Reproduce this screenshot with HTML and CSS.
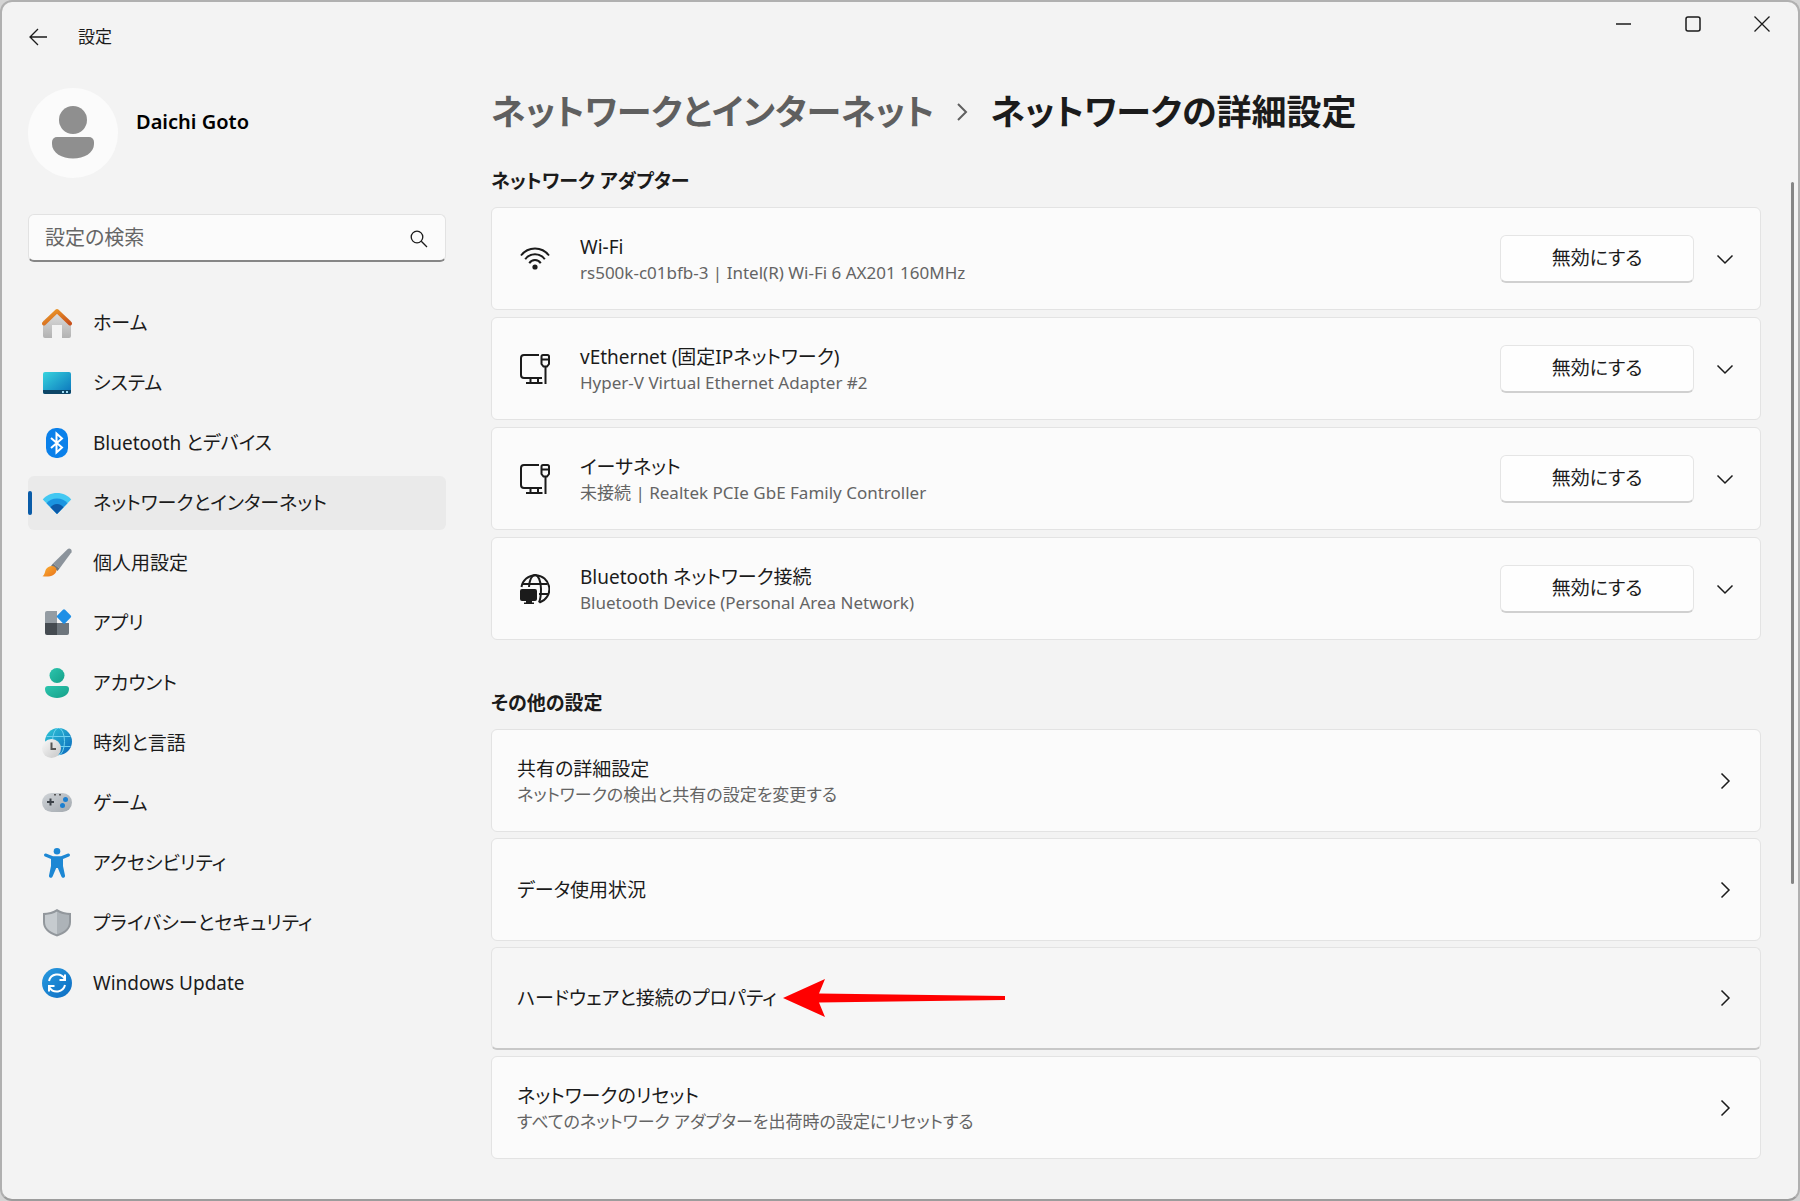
FILE: index.html
```html
<!DOCTYPE html>
<html lang="ja">
  <head>
    <meta charset="UTF-8" />
    <meta
      name="viewport"
      content="width=device-width, initial-scale=1.0"
    />
    <title>設定</title>

    <link rel="stylesheet" href="styles.css">
  </head>
  <body>
    <!-- shared icon shapes -->
    <svg class="sprite" width="0" height="0" aria-hidden="true">
      <symbol id="chevron-down" viewBox="0 0 18 18">
        <path d="M1.5 5.5 9 13l7.5-7.5" fill="none" stroke="currentColor" stroke-width="1.5" />
      </symbol>
      <symbol id="chevron-right" viewBox="0 0 18 18">
        <path d="M5.5 1.5 13 9l-7.5 7.5" fill="none" stroke="currentColor" stroke-width="1.5" />
      </symbol>
      <symbol id="ethernet" viewBox="0 0 30 30">
        <g fill="none" stroke="currentColor" stroke-width="2">
          <path d="M19 1H4a3 3 0 0 0-3 3v17a3 3 0 0 0 3 3h18M10.500 24v5M18 24v5M6 29h16.500" />
          <path d="M21.500 2.500a1.500 1.500 0 0 1 1.500-1.500h4.500a1.500 1.500 0 0 1 1.500 1.500V10l-2 2.500h-3.500L21.500 10zM21.500 5.500H29M25.500 12.500V30" />
        </g>
      </symbol>
    </svg>

    <div class="window">
      <header class="title-bar">
        <button class="back-button" aria-label="戻る">
          <svg width="18" height="18" viewBox="0 0 18 18">
            <path d="M9 1 1 9l8 8M1 9h17" fill="none" stroke="currentColor" stroke-width="1.3" />
          </svg>
        </button>
        <span class="app-name">設定</span>
        <div class="window-buttons">
          <button class="window-button" aria-label="最小化">
            <svg width="16" height="16" viewBox="0 0 16 16"><path d="M0 8h15" stroke="currentColor" stroke-width="1.500" /></svg>
          </button>
          <button class="window-button" aria-label="最大化">
            <svg width="16" height="16" viewBox="0 0 16 16"><rect x="1" y="1" width="14" height="14" rx="2" fill="none" stroke="currentColor" stroke-width="1.500" /></svg>
          </button>
          <button class="window-button" aria-label="閉じる">
            <svg width="16" height="16" viewBox="0 0 16 16"><path d="m.5.5 15 15m0-15-15 15" stroke="currentColor" stroke-width="1.300" /></svg>
          </button>
        </div>
      </header>

      <div class="layout">
        <aside class="sidebar">
          <div class="profile">
            <div class="avatar">
              <svg width="44" height="54" viewBox="0 0 44 54" fill="#8f8f8f">
                <circle cx="22" cy="14" r="14" />
                <path d="M6 31h32a5 5 0 0 1 5 5v2c0 9-10 14.500-21 14.500S1 47 1 38v-2a5 5 0 0 1 5-5z" />
              </svg>
            </div>
            <div class="profile-name">Daichi Goto</div>
          </div>

          <form class="search">
            <input class="search-input" type="search" placeholder="設定の検索" aria-label="設定の検索" />
            <svg class="search-icon" width="18" height="18" viewBox="0 0 18 18">
              <circle cx="7" cy="7" r="5.800" fill="none" stroke="currentColor" stroke-width="1.300" />
              <path d="m11.300 11.300 5.700 5.700" stroke="currentColor" stroke-width="1.300" />
            </svg>
          </form>

          <nav class="nav">
            <a class="nav-item" href="#">
              <svg class="nav-icon" viewBox="0 0 30 30">
                <defs>
                  <linearGradient id="roof" x2="1" y2="1"><stop stop-color="#f0a02a" /><stop offset="1" stop-color="#c8501b" /></linearGradient>
                  <linearGradient id="wall" x2="0" y2="1"><stop stop-color="#e3e3e3" /><stop offset="1" stop-color="#b2b2b2" /></linearGradient>
                </defs>
                <path d="M1 13 15 1l14 12v15a2 2 0 0 1-2 2h-7V17H10v13H3a2 2 0 0 1-2-2z" fill="url(#wall)" />
                <path d="M2 15.500 15 3l13 12.500" fill="none" stroke="url(#roof)" stroke-width="4" stroke-linecap="round" stroke-linejoin="round" />
              </svg>
              ホーム
            </a>
            <a class="nav-item" href="#">
              <svg class="nav-icon" viewBox="0 0 30 30">
                <defs><linearGradient id="screen" x2="1" y2="1"><stop stop-color="#37d4de" /><stop offset="1" stop-color="#0a72bb" /></linearGradient></defs>
                <rect x="1" y="4" width="28" height="22" rx="2" fill="url(#screen)" />
                <path d="M1 22h28v2a2 2 0 0 1-2 2H3a2 2 0 0 1-2-2z" fill="#0c4566" />
                <path d="M20 23h2v2h-2zM24 23h2v2h-2z" fill="#9fdcf5" />
              </svg>
              システム
            </a>
            <a class="nav-item" href="#">
              <svg class="nav-icon" viewBox="0 0 30 30">
                <rect x="4" width="22" height="30" rx="10" fill="#0a80ea" />
                <path d="m9 10 11 9.500-5.500 5V5.500l5.500 5L9 20" fill="none" stroke="#fff" stroke-width="2" />
              </svg>
              Bluetooth とデバイス
            </a>
            <a class="nav-item nav-item-active" href="#" aria-current="page">
              <svg class="nav-icon" viewBox="0 0 30 30">
                <path d="M15 26 .8 11.500C4 7.500 9 5 15 5s11 2.500 14.200 6.500z" fill="#43c8f2" />
                <path d="M15 26 4.500 15.300C7 12.300 10.500 10.500 15 10.500s8 1.800 10.500 4.800z" fill="#1b94e0" />
                <path d="M15 26 8.500 19.300C10 17.300 12.200 16 15 16s5 1.300 6.500 3.300z" fill="#0c59a8" />
              </svg>
              ネットワークとインターネット
            </a>
            <a class="nav-item" href="#">
              <svg class="nav-icon" viewBox="0 0 30 30">
                <defs><linearGradient id="tip" x2="1" y2="1"><stop stop-color="#fbb034" /><stop offset="1" stop-color="#e8731a" /></linearGradient></defs>
                <path d="M25.500 1.200c2-1.700 4.800.2 4 3L17.500 20.500 11 15.500z" fill="#8b939b" />
                <path d="M11 15.500l6.500 5-2 2.500-6.500-5z" fill="#6f777e" />
                <path d="M14.500 22.500C14 27 8 29.500.5 28.300c2.800-2 2-4.300 3.500-7 1.700-3.200 6.500-4.500 9-2.300 1 .9 1.600 2.100 1.500 3.500z" fill="url(#tip)" />
              </svg>
              個人用設定
            </a>
            <a class="nav-item" href="#">
              <svg class="nav-icon" viewBox="0 0 30 30">
                <path d="M5 3h10v12H3V5a2 2 0 0 1 2-2z" fill="#949ca3" />
                <path d="M3 15h12v12H5a2 2 0 0 1-2-2z" fill="#454b51" />
                <path d="M15 15h12v10a2 2 0 0 1-2 2H15z" fill="#6d757c" />
                <rect x="16.500" y="3" width="11" height="11" rx="1.500" transform="rotate(45 22 8.500)" fill="#1e8fe6" />
              </svg>
              アプリ
            </a>
            <a class="nav-item" href="#">
              <svg class="nav-icon" viewBox="0 0 30 30">
                <defs><linearGradient id="person" x2="1" y2="1"><stop stop-color="#2cc5ae" /><stop offset="1" stop-color="#15a088" /></linearGradient></defs>
                <circle cx="15" cy="7.500" r="7.500" fill="url(#person)" />
                <path d="M6 18h18a3 3 0 0 1 3 3c0 5.500-5.500 9-12 9S3 26.500 3 21a3 3 0 0 1 3-3z" fill="url(#person)" />
              </svg>
              アカウント
            </a>
            <a class="nav-item" href="#">
              <svg class="nav-icon" viewBox="0 0 30 30">
                <defs>
                  <linearGradient id="globe" x2="1" y2="1"><stop stop-color="#2fc8d6" /><stop offset="1" stop-color="#0b66bd" /></linearGradient>
                  <linearGradient id="clock" x2="1" y2="1"><stop stop-color="#fafafa" /><stop offset="1" stop-color="#c6c6c6" /></linearGradient>
                </defs>
                <circle cx="16.500" cy="13.500" r="13.500" fill="url(#globe)" />
                <g fill="none" stroke="#6fd0ee" stroke-width="1">
                  <ellipse cx="16.500" cy="13.500" rx="6" ry="13.500" />
                  <path d="M4.500 8.500h24M4.500 18.500h24" />
                </g>
                <circle cx="9.500" cy="20.500" r="9.500" fill="url(#clock)" />
                <path d="M9.500 14.500V21H14" fill="none" stroke="#555" stroke-width="2" />
              </svg>
              時刻と言語
            </a>
            <a class="nav-item" href="#">
              <svg class="nav-icon" viewBox="0 0 30 30">
                <defs><linearGradient id="pad" x2="1" y2="1"><stop stop-color="#d0d4d8" /><stop offset="1" stop-color="#a2a8ae" /></linearGradient></defs>
                <rect y="5" width="30" height="19" rx="9.500" fill="url(#pad)" />
                <path d="M8.500 10.500v7M5 14h7" stroke="#3c4248" stroke-width="2" />
                <circle cx="23.500" cy="11.500" r="2.500" fill="#1c7fd0" />
                <circle cx="20.500" cy="17.500" r="2.500" fill="#1c7fd0" />
                <path d="M12 6h2v1.500h-2zM17 6h2v1.500h-2z" fill="#555" />
              </svg>
              ゲーム
            </a>
            <a class="nav-item" href="#">
              <svg class="nav-icon" viewBox="0 0 30 30" fill="#1c87d4">
                <circle cx="15" cy="3.300" r="3.300" />
                <path d="M4 5.500 11 8.200h8L26 5.500c2-.7 2.700 2.300 1 3L21 11v7l2 9.500c.4 2.500-2.800 3-3.600 1L15.800 20h-1.600l-3.600 8.500c-.8 2-4 1.500-3.600-1L9 18v-7L3 8.500c-1.700-.7-1-3.700 1-3z" />
              </svg>
              アクセシビリティ
            </a>
            <a class="nav-item" href="#">
              <svg class="nav-icon" viewBox="0 0 30 30">
                <path d="M15 1c4 2.700 8.500 4 14 4v9c0 7-5 11.500-14 14.500C6 25.500 1 21 1 14V5c5.500 0 10-1.300 14-4z" fill="#92979c" />
                <path d="M15 3.500c3.500 2.200 7.500 3.200 12 3.400V14c0 5.800-4 9.600-12 12.300z" fill="#adb3b8" />
                <path d="M15 3.500C11.500 5.700 7.500 6.700 3 6.900V14c0 5.800 4 9.600 12 12.300z" fill="#c6cbcf" />
              </svg>
              プライバシーとセキュリティ
            </a>
            <a class="nav-item" href="#">
              <svg class="nav-icon" viewBox="0 0 30 30">
                <defs><linearGradient id="update" x2="1" y2="1"><stop stop-color="#2a9be0" /><stop offset="1" stop-color="#0c6cc2" /></linearGradient></defs>
                <circle cx="15" cy="15" r="15" fill="url(#update)" />
                <g fill="none" stroke="#fff" stroke-width="2">
                  <path d="M7 13a8.500 8.500 0 0 1 15.500-2.500M23 6.500V12h-5.500" />
                  <path d="M23 17a8.500 8.500 0 0 1-15.500 2.500M7 23.500V18h5.500" />
                </g>
              </svg>
              Windows Update
            </a>
          </nav>
        </aside>

        <main class="main">
          <h1 class="breadcrumb">
            <a class="breadcrumb-link" href="#">ネットワークとインターネット</a>
            <svg class="breadcrumb-arrow" width="12" height="20" viewBox="0 0 12 20">
              <path d="m2 2 8 8-8 8" fill="none" stroke="currentColor" stroke-width="2" />
            </svg>
            <span>ネットワークの詳細設定</span>
          </h1>

          <section class="section">
            <h2 class="section-title">ネットワーク アダプター</h2>
            <div class="card-list adapters">
              <div class="card">
                <svg class="card-icon" viewBox="0 0 30 30">
                  <g fill="none" stroke="currentColor" stroke-width="2">
                    <path d="M1 11.500C4.500 7 9.500 4.500 15 4.500S25.500 7 29 11.500" />
                    <path d="M5.200 15.300C7.500 12 11 10.300 15 10.300s7.500 1.700 9.800 5" />
                    <path d="M9.300 19.200c1.200-2 3.200-3.200 5.700-3.200s4.500 1.200 5.700 3.200" />
                  </g>
                  <circle cx="15" cy="23" r="2.600" fill="currentColor" />
                </svg>
                <div class="card-text">
                  <div class="card-title">Wi-Fi</div>
                  <div class="card-note">rs500k-c01bfb-3 | Intel(R) Wi-Fi 6 AX201 160MHz</div>
                </div>
                <button class="disable-button">無効にする</button>
                <button class="expand-button" aria-label="Wi-Fi"><svg class="chevron"><use href="#chevron-down" /></svg></button>
              </div>
              <div class="card">
                <svg class="card-icon"><use href="#ethernet" /></svg>
                <div class="card-text">
                  <div class="card-title">vEthernet (固定IPネットワーク)</div>
                  <div class="card-note">Hyper-V Virtual Ethernet Adapter #2</div>
                </div>
                <button class="disable-button">無効にする</button>
                <button class="expand-button" aria-label="vEthernet"><svg class="chevron"><use href="#chevron-down" /></svg></button>
              </div>
              <div class="card">
                <svg class="card-icon"><use href="#ethernet" /></svg>
                <div class="card-text">
                  <div class="card-title">イーサネット</div>
                  <div class="card-note">未接続 | Realtek PCIe GbE Family Controller</div>
                </div>
                <button class="disable-button">無効にする</button>
                <button class="expand-button" aria-label="イーサネット"><svg class="chevron"><use href="#chevron-down" /></svg></button>
              </div>
              <div class="card">
                <svg class="card-icon" viewBox="0 0 30 30">
                  <g fill="none" stroke="currentColor" stroke-width="2">
                    <path d="M1.500 13A14 14 0 1 1 19.500 28.500" />
                    <path d="M9 13c.3-7 2.800-12 6-12s6 6 6 14c0 6-.7 10.500-2 13.500" />
                    <path d="M3 10h24.500M19 20h9" />
                  </g>
                  <path d="M2 15h13a2 2 0 0 1 2 2v8a2 2 0 0 1-2 2h-3v1.500h2V30H4v-1.500h2V27H2a2 2 0 0 1-2-2v-8a2 2 0 0 1 2-2z" fill="currentColor" />
                </svg>
                <div class="card-text">
                  <div class="card-title">Bluetooth ネットワーク接続</div>
                  <div class="card-note">Bluetooth Device (Personal Area Network)</div>
                </div>
                <button class="disable-button">無効にする</button>
                <button class="expand-button" aria-label="Bluetooth"><svg class="chevron"><use href="#chevron-down" /></svg></button>
              </div>
            </div>
          </section>

          <section class="section">
            <h2 class="section-title">その他の設定</h2>
            <div class="card-list">
              <a class="card" href="#">
                <div class="card-text">
                  <div class="card-title">共有の詳細設定</div>
                  <div class="card-note">ネットワークの検出と共有の設定を変更する</div>
                </div>
                <svg class="chevron"><use href="#chevron-right" /></svg>
              </a>
              <a class="card" href="#">
                <div class="card-text">
                  <div class="card-title">データ使用状況</div>
                </div>
                <svg class="chevron"><use href="#chevron-right" /></svg>
              </a>
              <a class="card card-hover" href="#">
                <div class="card-text">
                  <div class="card-title">
                    <span class="pointed">ハードウェアと接続のプロパティ
                      <svg class="arrow" width="222" height="38" viewBox="0 0 222 38">
                        <path d="M0 19 42 0l-6 14.500 186 2.500v4L36 23.500 42 38z" fill="#f00" />
                      </svg>
                    </span>
                  </div>
                </div>
                <svg class="chevron"><use href="#chevron-right" /></svg>
              </a>
              <a class="card" href="#">
                <div class="card-text">
                  <div class="card-title">ネットワークのリセット</div>
                  <div class="card-note">すべてのネットワーク アダプターを出荷時の設定にリセットする</div>
                </div>
                <svg class="chevron"><use href="#chevron-right" /></svg>
              </a>
            </div>
          </section>
        </main>
      </div>
      <div class="scroll-thumb"></div>
    </div>
  </body>
</html>
```
FILE: styles.css
```css
* {
  box-sizing: border-box;
}

body {
  margin: 0;
  background: #d4d4d4;
  color: #1b1b1b;
  font-family: "Noto Sans", "Noto Sans CJK JP", sans-serif;
  font-size: 19px;
  line-height: 28px;
  font-feature-settings: "palt";
}

a {
  color: inherit;
  text-decoration: none;
}

button {
  padding: 0;
  border: none;
  background: none;
  color: inherit;
  font: inherit;
  font-feature-settings: inherit;
}

.sprite {
  position: absolute;
}

.window {
  position: relative;
  min-height: 100vh;
  border: 2px solid #b0b0b0;
  border-bottom-color: #9c9c9c;
  border-radius: 12px;
  background: #f3f3f3;
}

/* title bar */
.title-bar {
  display: flex;
  align-items: flex-start;
  height: 70px;
  padding-right: 2px;
}

.back-button {
  display: flex;
  align-items: center;
  justify-content: center;
  width: 48px;
  height: 70px;
  margin-left: 12px;
}

.app-name {
  margin-left: 16px;
  font-size: 17px;
  line-height: 70px;
}

.window-buttons {
  display: flex;
  margin-left: auto;
}

.window-button {
  display: flex;
  align-items: center;
  justify-content: center;
  width: 69px;
  height: 44px;
}

.layout {
  display: grid;
  grid-template-columns: 418px 1fr;
  gap: 45px;
  padding: 0 37px 36px 26px;
}

/* sidebar */
.profile {
  display: flex;
  gap: 18px;
  margin-top: 16px;
}

.avatar {
  display: flex;
  align-items: center;
  justify-content: center;
  width: 90px;
  height: 90px;
  border-radius: 50%;
  background: #fbfbfb;
}

.profile-name {
  padding-top: 20px;
  color: #000;
  font-size: 20px;
  font-weight: 600;
}

.search {
  position: relative;
  margin-top: 36px;
}

.search-input {
  display: block;
  width: 100%;
  height: 48px;
  padding: 0 56px 0 16px;
  border: 1px solid #e2e2e2;
  border-bottom: 2px solid #868686;
  border-radius: 6px;
  background: #fbfbfb;
  font: inherit;
  font-size: 20px;
  outline: none;
}

.search-input::placeholder {
  color: #666;
  opacity: 1;
}

.search-icon {
  position: absolute;
  top: 16px;
  right: 18px;
}

.nav {
  display: flex;
  flex-direction: column;
  gap: 6px;
  margin-top: 34px;
}

.nav-item {
  position: relative;
  display: flex;
  align-items: center;
  gap: 21px;
  height: 54px;
  padding: 0 14px;
  border-radius: 6px;
  white-space: nowrap;
}

.nav-item-active {
  background: #eaeaea;
}

.nav-item-active::before {
  content: "";
  position: absolute;
  left: 0;
  top: 15px;
  width: 4px;
  height: 24px;
  border-radius: 2px;
  background: #0a5ca8;
}

.nav-icon {
  width: 30px;
  height: 30px;
}

/* main area */
.breadcrumb {
  display: flex;
  align-items: center;
  margin: 12px 0 0;
  font-size: 35px;
  font-weight: 600;
  line-height: 56px;
  white-space: nowrap;
}

.breadcrumb-link {
  color: #5f5f5f;
}

.breadcrumb-arrow {
  margin: 0 22px;
  color: #5f5f5f;
}

.section + .section {
  margin-top: 49px;
}

.section-title {
  margin: 0 0 12px;
  font-size: 19px;
  font-weight: 600;
  line-height: 28px;
}

.breadcrumb + .section {
  margin-top: 27px;
}

.card-list {
  display: flex;
  flex-direction: column;
  gap: 6px;
}

.adapters {
  gap: 7px;
}

.card {
  display: flex;
  align-items: center;
  min-height: 103px;
  padding: 0 26px 0 25px;
  border: 1px solid #e3e3e3;
  border-radius: 6px;
  background: #fbfbfb;
}

.card-hover {
  border-bottom: 2px solid #c8c8c8;
  background: #f6f6f6;
}

.card-icon {
  width: 30px;
  height: 30px;
  margin: 0 30px 0 3px;
}

.card-text {
  flex: 1;
}

.card-note {
  color: #646464;
  font-size: 17px;
  line-height: 24px;
}

.disable-button {
  width: 194px;
  height: 48px;
  border: 1px solid #e5e5e5;
  border-bottom: 2px solid #d0d0d0;
  border-radius: 6px;
  background: #fefefe;
}

.expand-button {
  display: flex;
  margin-left: 22px;
}

.chevron {
  width: 18px;
  height: 18px;
}

/* red arrow drawn over the row */
.pointed {
  position: relative;
}

.arrow {
  position: absolute;
  left: 100%;
  top: 50%;
  margin-left: 6px;
  transform: translateY(-50%);
}

.scroll-thumb {
  position: absolute;
  top: 180px;
  right: 4px;
  width: 3px;
  height: 702px;
  border-radius: 2px;
  background: #868686;
}
```
